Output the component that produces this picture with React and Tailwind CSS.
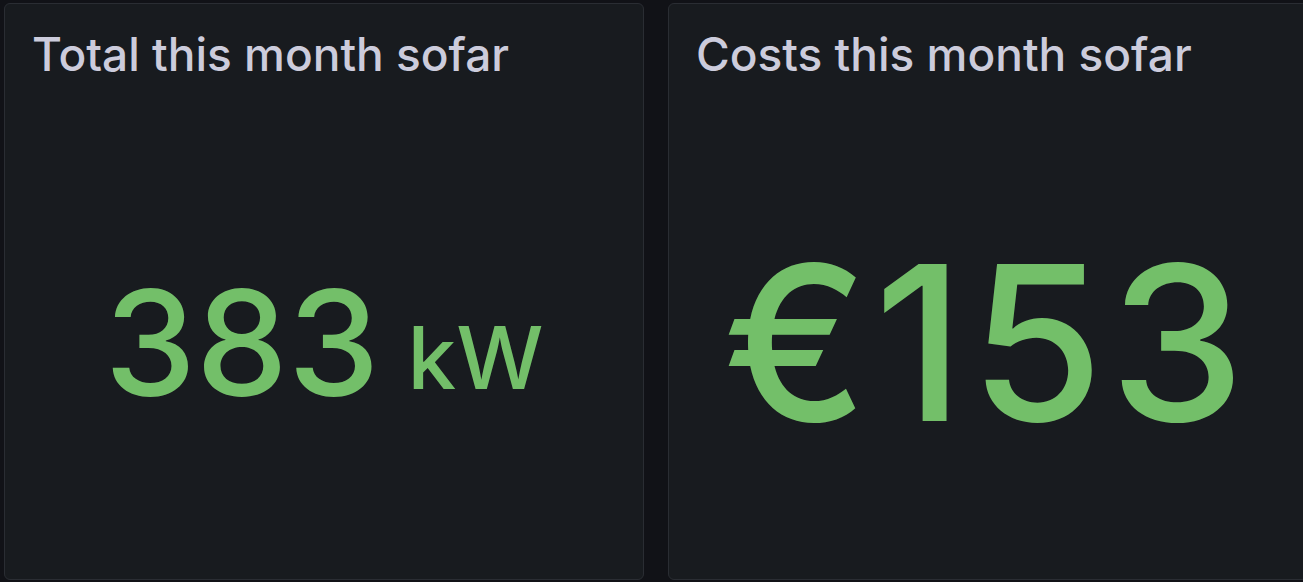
import React from 'react'

// Grafana-style stat panels
function StatPanel({ title, children }) {
  return (
    <div className="flex flex-col w-[640px] shrink-0 h-full bg-[#181b1f] border border-[#2a2d33] rounded-[6px] overflow-hidden">
      <div className="px-[27px] pt-[24px] h-[80px] text-[46px] leading-[52px] font-medium text-[#ccccdc] whitespace-nowrap">
        {title}
      </div>
      <div className="flex-1 flex items-center justify-center pt-[22px] text-[#73bf69] whitespace-nowrap">
        {children}
      </div>
    </div>
  )
}

export default function App() {
  return (
    <div
      className="w-[1303px] h-[582px] bg-[#111217] overflow-hidden pl-[4px] pt-[3px] pb-[2px] flex gap-[24px]"
      style={{ fontFamily: 'Inter, "Noto Sans", sans-serif' }}
    >
      <StatPanel title="Total this month sofar">
        <span className="text-[146px] leading-none font-medium">383</span>
        <span className="text-[87px] leading-none font-medium ml-[28px] mt-[30px]">kW</span>
      </StatPanel>
      <StatPanel title="Costs this month sofar">
        <span className="text-[216px] leading-none font-medium tracking-[6px] mr-[2px]">€153</span>
      </StatPanel>
    </div>
  )
}
